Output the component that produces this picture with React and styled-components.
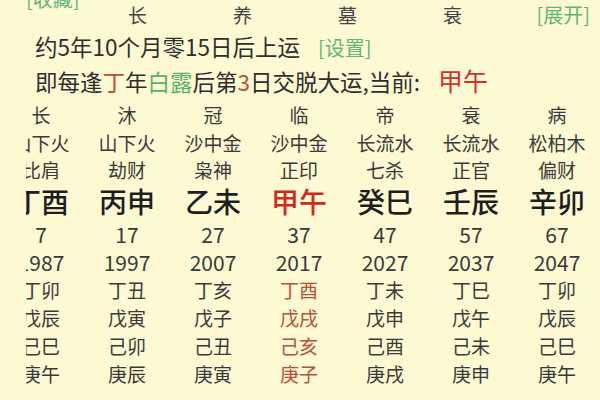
import React from 'react';
import styled, { createGlobalStyle } from 'styled-components';

const GlobalStyle = createGlobalStyle`
  html, body {
    margin: 0;
    padding: 0;
    background: #fcf9d3;
  }
  body {
    font-family: "Noto Sans CJK SC", "Noto Sans", sans-serif;
    color: #333;
  }
`;

const stages = ['长', '养', '墓', '衰'];

const columns = [
  { stage: '长', nayin: '山下火', god: '比肩', pillar: '丁酉', age: 7, year: 1987, flow: ['丁卯', '戊辰', '己巳', '庚午'] },
  { stage: '沐', nayin: '山下火', god: '劫财', pillar: '丙申', age: 17, year: 1997, flow: ['丁丑', '戊寅', '己卯', '庚辰'] },
  { stage: '冠', nayin: '沙中金', god: '枭神', pillar: '乙未', age: 27, year: 2007, flow: ['丁亥', '戊子', '己丑', '庚寅'] },
  { stage: '临', nayin: '沙中金', god: '正印', pillar: '甲午', age: 37, year: 2017, flow: ['丁酉', '戊戌', '己亥', '庚子'], current: true },
  { stage: '帝', nayin: '长流水', god: '七杀', pillar: '癸巳', age: 47, year: 2027, flow: ['丁未', '戊申', '己酉', '庚戌'] },
  { stage: '衰', nayin: '长流水', god: '正官', pillar: '壬辰', age: 57, year: 2037, flow: ['丁巳', '戊午', '己未', '庚申'] },
  { stage: '病', nayin: '松柏木', god: '偏财', pillar: '辛卯', age: 67, year: 2047, flow: ['丁卯', '戊辰', '己巳', '庚午'] },
];

const App = () => (
  <Page>
    <GlobalStyle />
    <CollectRow>
      <LinkText>[收藏]</LinkText>
    </CollectRow>
    <StageRow>
      {stages.map((s, i) => (
        <StageCell key={i}>{s}</StageCell>
      ))}
      <Expand>[展开]</Expand>
    </StageRow>
    <InfoLine>
      约5年10个月零15日后上运
      <Setting>[设置]</Setting>
    </InfoLine>
    <InfoLine $second>
      即每逢<Mark $tone="brown">丁</Mark>年<Mark $tone="green">白露</Mark>后第<Mark $tone="brown">3</Mark>日交脱大运,当前:
      <Current>甲午</Current>
    </InfoLine>
    <TableClip>
      <Table>
        {columns.map((c) => (
          <Cell key={'s' + c.year} $h={28}>{c.stage}</Cell>
        ))}
        {columns.map((c) => (
          <Cell key={'n' + c.year} $h={28}>{c.nayin}</Cell>
        ))}
        {columns.map((c) => (
          <Cell key={'g' + c.year} $h={26}>{c.god}</Cell>
        ))}
        {columns.map((c) => (
          <Pillar key={'p' + c.year} $current={c.current}>{c.pillar}</Pillar>
        ))}
        {columns.map((c) => (
          <Cell key={'a' + c.year} $h={30} $num>{c.age}</Cell>
        ))}
        {columns.map((c) => (
          <Cell key={'y' + c.year} $h={27} $num>{c.year}</Cell>
        ))}
        {[0, 1, 2, 3].map((r) =>
          columns.map((c) => (
            <Cell key={'f' + r + c.year} $h={28} $current={c.current}>
              {c.flow[r]}
            </Cell>
          ))
        )}
      </Table>
    </TableClip>
  </Page>
);

export default App;

const Page = styled.div`
  width: 600px;
  height: 400px;
  overflow: hidden;
  position: relative;
`;

const CollectRow = styled.div`
  height: 16px;
  line-height: 16px;
  margin-top: -9px;
  padding-left: 26px;
`;

const LinkText = styled.span`
  font-size: 20px;
  color: #62b47c;
`;

const StageRow = styled.div`
  display: flex;
  align-items: center;
  height: 16px;
  line-height: 16px;
  padding-left: 85px;
  padding-right: 10px;
`;

const StageCell = styled.span`
  width: 105px;
  text-align: center;
  font-size: 19px;
  color: #444;
`;

const Expand = styled(LinkText)`
  margin-left: auto;
`;

const InfoLine = styled.div`
  display: flex;
  align-items: baseline;
  height: 30px;
  line-height: 30px;
  margin-top: ${({ $second }) => ($second ? '4px' : '8px')};
  padding-left: 35px;
  font-size: 22.5px;
  color: #2e2e2e;
  white-space: pre;
`;

const Setting = styled.span`
  font-size: 20px;
  color: #62b47c;
  margin-left: 18px;
`;

const Mark = styled.span`
  color: ${({ $tone }) => ($tone === 'green' ? '#55b468' : '#b8503a')};
`;

const Current = styled.span`
  font-size: 25px;
  color: #d3302a;
  margin-left: 18px;
`;

const TableClip = styled.div`
  margin-top: 6px;
  margin-left: 26px;
  overflow: hidden;
`;

const Table = styled.div`
  display: grid;
  grid-template-columns: repeat(7, 86px);
  margin-left: -28px;
`;

const Cell = styled.div`
  height: ${({ $h }) => $h}px;
  line-height: ${({ $h }) => $h}px;
  text-align: center;
  font-size: ${({ $num }) => ($num ? '21px' : '19px')};
  color: ${({ $current }) => ($current ? '#b8503a' : '#3a3a3a')};
  white-space: nowrap;
`;

const Pillar = styled.div`
  height: 36px;
  line-height: 36px;
  text-align: center;
  font-size: 28px;
  font-weight: 500;
  color: ${({ $current }) => ($current ? '#cf2a22' : '#1e1e1e')};
  white-space: nowrap;
`;
